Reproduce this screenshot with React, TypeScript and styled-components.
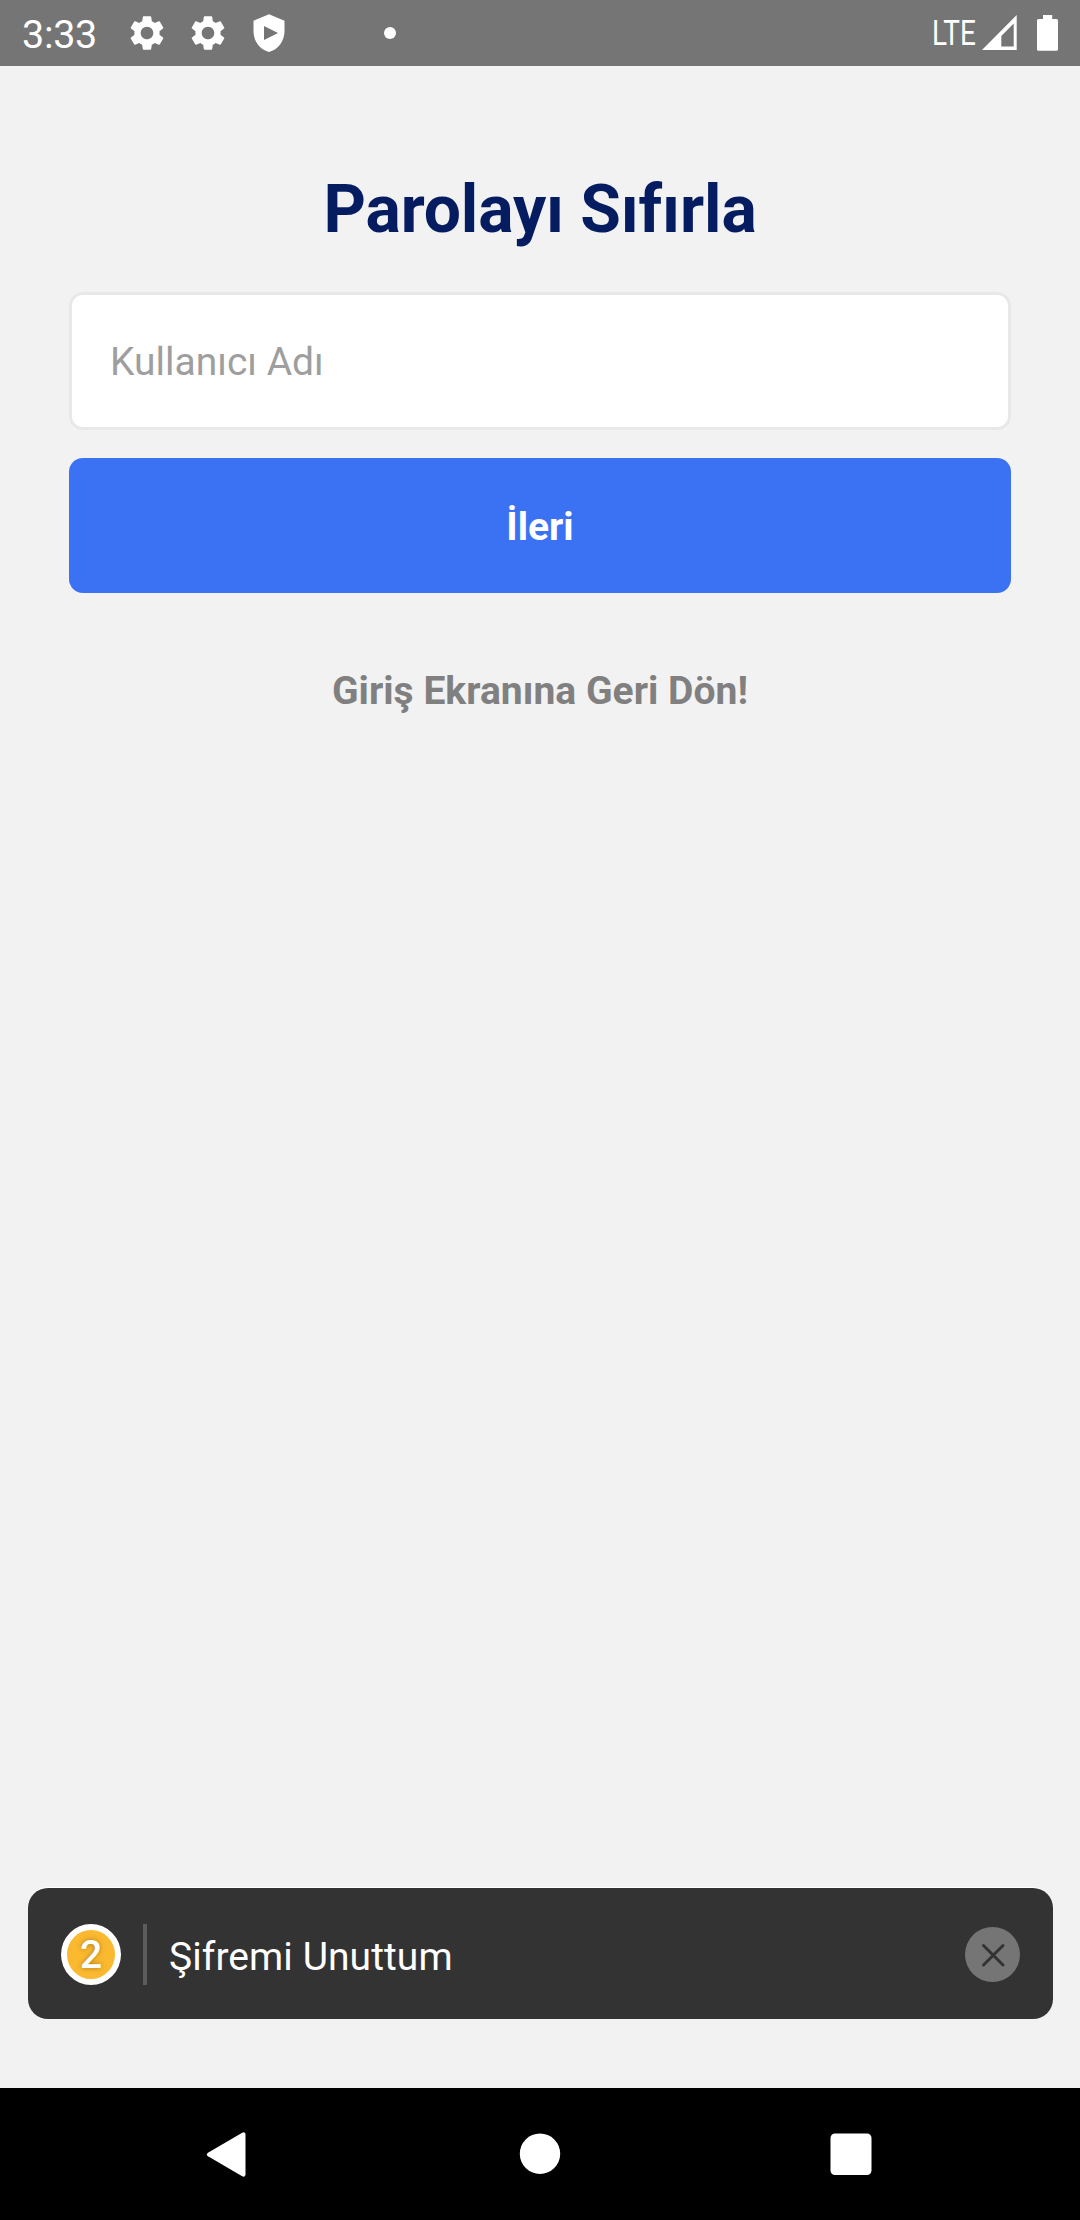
import React from "react";
import styled, { createGlobalStyle } from "styled-components";
import { MdSettings } from "react-icons/md";

const GlobalStyle = createGlobalStyle`
  *, *::before, *::after { box-sizing: border-box; }
  body { margin: 0; background: #f2f2f2; }
  button, input { font: inherit; border: 0; margin: 0; padding: 0; }
`;

const Screen = styled.div`
  display: flex;
  flex-direction: column;
  width: 1080px;
  height: 2220px;
  background: #f2f2f2;
  font-family: Roboto, "Noto Sans", sans-serif;
  font-size: 39px;
  line-height: 46px;
  overflow: hidden;
`;

const StatusBar = styled.header`
  display: flex;
  justify-content: space-between;
  height: 66px;
  flex: none;
  padding: 0 22px 0 22px;
  background: #757575;
  color: #fff;
  svg { display: block; flex: none; }
`;

const StatusGroup = styled.div`
  display: flex;
  align-items: center;
  height: 66px;
`;

const Clock = styled.span`
  width: 103.5px;
  padding-top: 3px;
  font-size: 39.5px;
  letter-spacing: -0.3px;
`;

const Notifications = styled.div`
  display: flex;
  align-items: center;
  gap: 19px;
`;

const MoreDot = styled.span`
  width: 12px;
  height: 12px;
  margin-left: 94.5px;
  border-radius: 50%;
  background: #fff;
`;

const NetworkType = styled.span`
  width: 53px;
  margin-right: -3px;
  font-size: 34.5px;
  white-space: nowrap;
  transform: scaleX(0.81);
  transform-origin: 0 50%;
`;

const Main = styled.main`
  display: flex;
  flex-direction: column;
  flex: 1;
  padding: 0 69px;
`;

const Title = styled.h1`
  margin: 105px 0 0;
  font-size: 66px;
  line-height: 78px;
  font-weight: 700;
  letter-spacing: -0.12px;
  color: #051c60;
  text-align: center;
`;

const Field = styled.input`
  width: 100%;
  height: 138px;
  margin-top: 43px;
  padding: 2px 38px 0;
  border: 3px solid #e8e8e8;
  border-radius: 14px;
  background: #fff;
  outline: none;
  &::placeholder { color: #9e9e9e; opacity: 1; }
`;

const PrimaryButton = styled.button`
  height: 135px;
  margin-top: 28px;
  padding-top: 3px;
  border-radius: 14px;
  background: #3b71f3;
  color: #fff;
  font-weight: 700;
`;

const LinkButton = styled.button`
  margin-top: 75px;
  background: transparent;
  color: #808080;
  font-weight: 700;
  letter-spacing: 0.04px;
`;

const Toast = styled.aside`
  display: flex;
  align-items: center;
  height: 131px;
  margin: 0 27px 69px 28px;
  padding: 2px 33px 0;
  border-radius: 20px;
  background: #333;
  box-shadow: 0 -1px 0 #fff;
  color: #fff;
  flex: none;
`;

const Badge = styled.span`
  display: flex;
  align-items: center;
  justify-content: center;
  width: 60px;
  height: 61px;
  border: 6px solid #fff;
  border-radius: 50%;
  background: #fbb930;
  font-weight: 500;
  text-shadow: 0 0 5px rgba(90, 60, 0, 0.5);
`;

const Divider = styled.span`
  width: 4px;
  height: 61px;
  margin: 0 22px;
  background: #5c5c5c;
`;

const Message = styled.span`
  flex: 1;
  padding-top: 4px;
  letter-spacing: 0.07px;
`;

const CloseButton = styled.button`
  display: flex;
  align-items: center;
  justify-content: center;
  width: 55px;
  height: 55px;
  border-radius: 50%;
  background: #757575;
`;

const NavBar = styled.nav`
  display: flex;
  justify-content: center;
  align-items: center;
  height: 132px;
  flex: none;
  background: #000;
`;

const NavButton = styled.button`
  display: flex;
  justify-content: center;
  width: 310.5px;
  background: transparent;
`;

export default function App() {
  return (
    <Screen>
      <GlobalStyle />
      <StatusBar>
        <StatusGroup>
          <Clock>3:33</Clock>
          <Notifications>
            <MdSettings size={42} />
            <MdSettings size={42} />
            <svg width="42" height="40" viewBox="0 0 42 40" fill="#fff">
              <path
                fillRule="evenodd"
                d="M21 1.300 36.500 7.800V18C36.500 28.500 30 36.500 21 39 12 36.500 5.500 28.500 5.500 18V7.800ZM16 13V27L30 20Z"
              />
            </svg>
          </Notifications>
          <MoreDot />
        </StatusGroup>
        <StatusGroup>
          <NetworkType>LTE</NetworkType>
          <svg width="76" height="66" viewBox="0 0 76 66" fill="#fff">
            <path fillRule="evenodd" d="M34.700 15V50H0ZM31.700 23.500 19.300 36V46.500H31.700Z" />
            <path d="M61 15h9.200v4H74.500q1.500 0 1.500 1.500V49.300q0 1.500-1.500 1.500H56.500q-1.500 0-1.500-1.500V20.500q0-1.500 1.500-1.500H61Z" />
          </svg>
        </StatusGroup>
      </StatusBar>

      <Main>
        <Title>Parolayı Sıfırla</Title>
        <Field placeholder="Kullanıcı Adı" />
        <PrimaryButton>İleri</PrimaryButton>
        <LinkButton>Giriş Ekranına Geri Dön!</LinkButton>
      </Main>

      <Toast>
        <Badge>2</Badge>
        <Divider />
        <Message>Şifremi Unuttum</Message>
        <CloseButton aria-label="Kapat">
          <svg width="26" height="26" viewBox="0 0 26 26" stroke="#333" strokeWidth="3" strokeLinecap="round">
            <path d="M3.500 3.500 23 23M23 3.500 3.500 23" />
          </svg>
        </CloseButton>
      </Toast>

      <NavBar>
        <NavButton aria-label="Geri">
          <svg width="68" height="46" viewBox="0 0 68 46" fill="#fff">
            <path d="M49.500 3V44Q48.800 46.500 46.200 45.300L12 25.300Q9.500 23.500 12 21.700L46.200 1.700Q48.800 .5 49.500 3Z" />
          </svg>
        </NavButton>
        <NavButton aria-label="Ana ekran">
          <svg width="42" height="46" viewBox="0 0 42 46" fill="#fff">
            <circle cx="21" cy="22.700" r="20.200" />
          </svg>
        </NavButton>
        <NavButton aria-label="Son uygulamalar">
          <svg width="42" height="46" viewBox="0 0 42 46" fill="#fff">
            <rect x="0.500" y="2.500" width="41" height="41.500" rx="4.500" />
          </svg>
        </NavButton>
      </NavBar>
    </Screen>
  );
}
